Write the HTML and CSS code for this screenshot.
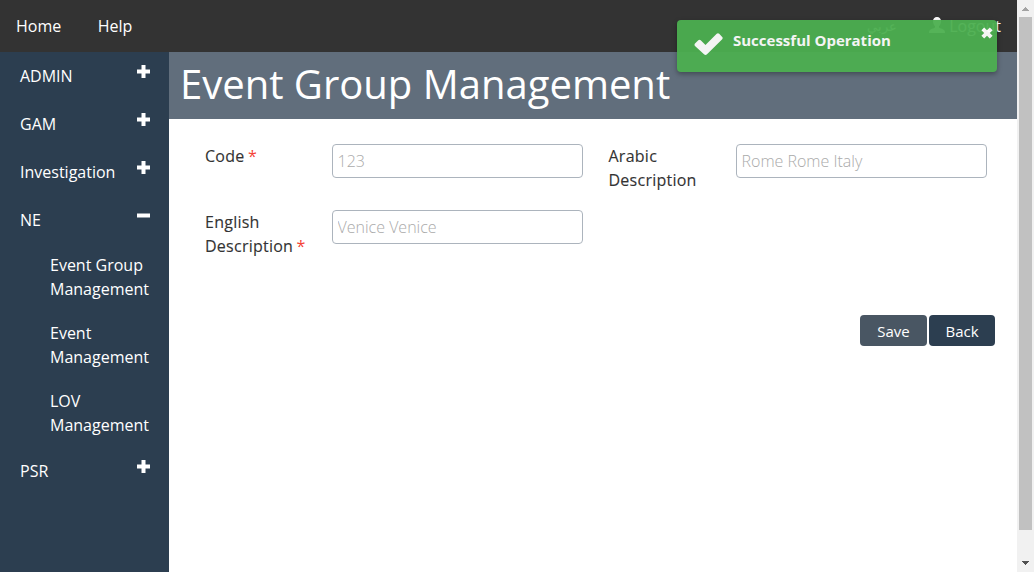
FILE: index.html
```html
<!DOCTYPE html>
<html lang="en">
<head>
<meta charset="utf-8">
<title>Event Group Management</title>
<link rel="stylesheet" href="styles.css">
</head>
<body>
<svg class="sprite" aria-hidden="true">
  <symbol id="plus" viewBox="0 0 13 13"><path d="M4.500 0h4v4.500H13v4H8.500V13h-4V8.500H0v-4h4.500z"/></symbol>
  <symbol id="minus" viewBox="0 0 13 13"><path d="M0 4.500h13v4H0z"/></symbol>
</svg>
<div class="app">
  <div class="page">
    <header class="topbar">
      <nav class="menu"><a class="home">Home</a><a>Help</a></nav>
      <div class="user">
        <a class="language" lang="ar">عربي</a>
        <a class="logout"><svg class="person" viewBox="0 0 16 16"><path d="M8 0c2.500 0 4 1.800 4 4.300C12 6.500 11 8.500 10 9.200v1.300c1 .8 5 1.700 5.600 3.200.4.800.4 1.600.4 2.300H0c0-.7 0-1.500.4-2.300C1 12.200 5 11.300 6 10.500V9.200C5 8.500 4 6.500 4 4.300 4 1.800 5.500 0 8 0z"/></svg><span>Logout</span></a>
      </div>
    </header>
    <div class="body">
      <aside class="sidebar">
        <div class="group"><span>ADMIN</span><svg class="toggle"><use href="#plus"/></svg></div>
        <div class="group"><span>GAM</span><svg class="toggle"><use href="#plus"/></svg></div>
        <div class="group"><span>Investigation</span><svg class="toggle"><use href="#plus"/></svg></div>
        <div class="group"><span>NE</span><svg class="toggle"><use href="#minus"/></svg></div>
        <div class="submenu">
          <a>Event Group<br>Management</a>
          <a>Event<br>Management</a>
          <a>LOV<br>Management</a>
        </div>
        <div class="group"><span>PSR</span><svg class="toggle"><use href="#plus"/></svg></div>
      </aside>
      <main class="content">
        <h1 class="title">Event Group Management</h1>
        <form class="form">
          <label class="label" for="code">Code <span class="required">*</span></label>
          <input class="field" id="code" value="123">
          <label class="label second" for="arabic">Arabic Description</label>
          <input class="field" id="arabic" value="Rome Rome Italy">
          <label class="label" for="english">English Description <span class="required">*</span></label>
          <input class="field" id="english" value="Venice Venice">
        </form>
        <div class="actions">
          <button class="button save">Save</button>
          <button class="button back">Back</button>
        </div>
      </main>
    </div>
  </div>
  <div class="scrollbar">
    <svg class="arrow up" viewBox="0 0 7 4"><path d="M3 0h1v1h1v1h1v1h1v1H0V3h1V2h1V1h1z"/></svg>
    <div class="thumb"></div>
    <svg class="arrow down" viewBox="0 0 7 4"><path d="M0 0h7v1H6v1H5v1H4v1H3V3H2V2H1V1H0z"/></svg>
  </div>
</div>
<div class="toast">
  <svg class="check" viewBox="0 0 29 22"><path d="M1 10.500 4.300 7.200q1.200-.9 2.400 0L11.500 12 22.700.8q1.300-1 2.500 0l3 3.100q1 1.200 0 2.400L13 21.300q-1.500 1.200-3 0L1 13q-1-1.300 0-2.500z"/></svg>
  <span class="message">Successful Operation</span>
  <svg class="close" viewBox="0 0 12 12"><path d="M3.200.4 6 3.200 8.800.4 11.600 3.200 8.800 6l2.800 2.800-2.800 2.800L6 8.800l-2.800 2.800L.4 8.800 3.200 6 .4 3.200z"/></svg>
</div>
</body>
</html>
```
FILE: styles.css
```css
* { box-sizing: border-box; }
body {
  margin: 0;
  height: 572px;
  overflow: hidden;
  font: 16px/24px "Open Sans", "Noto Sans", sans-serif;
  color: #333;
  background: #fff;
}
.sprite { position: absolute; width: 0; height: 0; }
.app { display: flex; height: 572px; }
.page { width: 1017px; display: flex; flex-direction: column; }
.topbar {
  height: 52px;
  display: flex;
  justify-content: space-between;
  align-items: center;
  padding: 0 16px;
  color: #fff;
  background: #333;
}
.menu { display: flex; gap: 36.5px; }
.user { display: flex; gap: 32px; }
.language { font-size: 13px; }
.logout { display: flex; align-items: center; gap: 4px; }
.person { width: 16px; height: 16px; margin-bottom: 2px; fill: #fff; }
.body { flex: 1; display: flex; min-height: 0; }
.sidebar { width: 169px; color: #fff; background: #2c3e50; }
.group {
  height: 48px;
  display: flex;
  justify-content: space-between;
  padding: 12px 19px 12px 20px;
}
.toggle { width: 13px; height: 13px; margin-top: 1px; fill: #fff; }
.submenu {
  display: flex;
  flex-direction: column;
  gap: 20px;
  padding: 9px 0 10px 50px;
}
.content { flex: 1; min-width: 0; }
.title {
  height: 67px;
  margin: 0;
  padding-left: 11px;
  font-size: 40px;
  line-height: 64px;
  font-weight: 400;
  color: #fff;
  background: #616e7c;
}
.form {
  display: grid;
  grid-template-columns: 127px 251px 153px 251px;
  grid-template-rows: 48px 48px;
  row-gap: 18px;
  padding: 25px 0 0 36px;
}
.label {
  padding-right: 20px;
  letter-spacing: .25px;
  -webkit-text-stroke: .12px currentColor;
}
.second { padding-left: 25.500px; }
.required { color: #f44336; margin-left: -1px; -webkit-text-stroke: 0; }
.field {
  width: 251px;
  height: 34px;
  padding: 0 4.500px;
  border: 1px solid #acb4bd;
  border-radius: 4px;
  outline: 0;
  font: 300 16px "Open Sans", "Noto Sans", sans-serif;
  color: #aaa;
  background: #fff;
}
.actions {
  display: flex;
  justify-content: flex-end;
  gap: 2px;
  padding: 57px 22px 0 0;
}
.button {
  height: 31px;
  padding: 0;
  border: 0;
  border-radius: 4px;
  font: 15px "Open Sans", "Noto Sans", sans-serif;
  color: #fff;
}
.save { width: 67px; background: #495663; }
.back { width: 66px; background: #2c3e50; }
.scrollbar {
  width: 17px;
  display: flex;
  flex-direction: column;
  align-items: center;
  background: #f1f1f1;
}
.arrow { width: 7px; height: 4px; }
.up { margin: 7px 0 6px; fill: #a3a3a3; }
.down { margin: auto 0 7px; fill: #505050; }
.thumb { width: 13px; height: 513px; background: #c1c1c1; }
.toast {
  position: absolute;
  left: 677px;
  top: 20px;
  width: 320px;
  height: 52px;
  display: flex;
  padding: 8px 4px 0 17px;
  border-radius: 4px;
  color: #fff;
  background: #4caf50;
  box-shadow: 0 2px 5px rgba(0, 0, 0, .35);
  opacity: .95;
}
.check { width: 29px; height: 22px; margin-top: 5px; fill: #fff; }
.message {
  margin-left: 10px;
  font-size: 15px;
  font-weight: 700;
}
.close { width: 12px; height: 12px; margin-left: auto; margin-top: -1px; fill: #fff; }
```
